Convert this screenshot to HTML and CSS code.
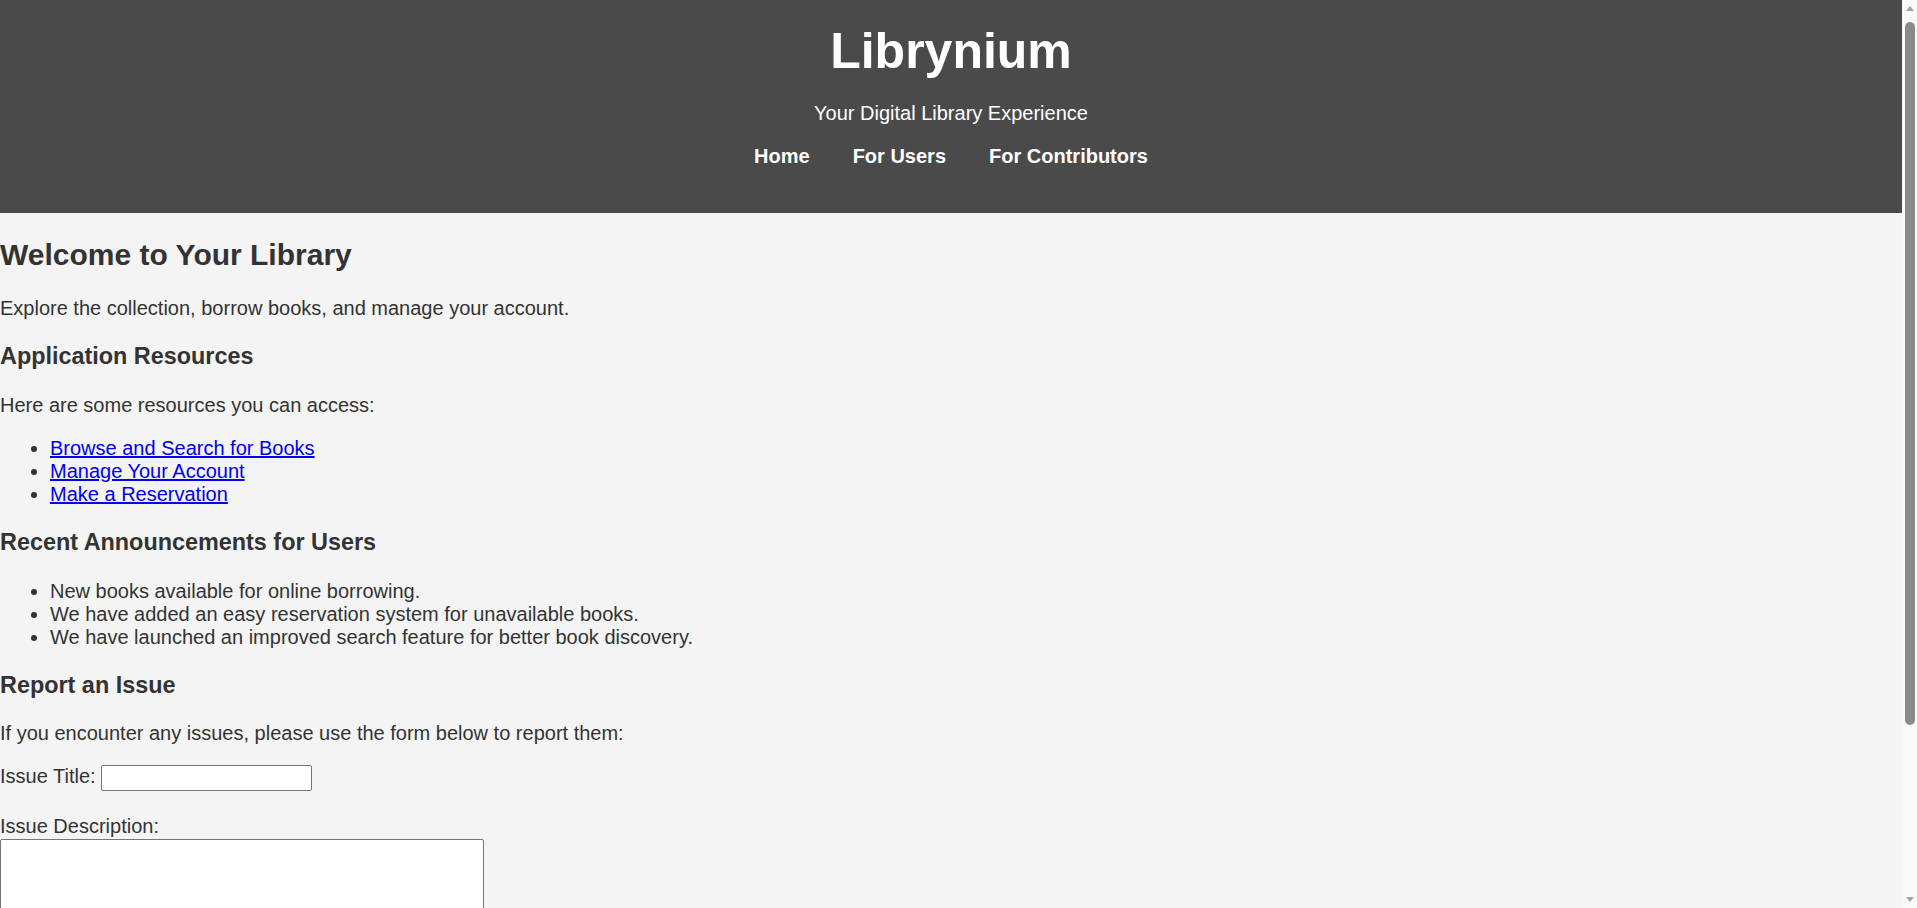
FILE: index.html
```html
<!DOCTYPE html>
<html lang="en">
<head>
<meta charset="utf-8">
<title>Librynium</title>
<link rel="stylesheet" href="styles.css">
</head>
<body>
<header class="site-header">
  <h1 class="site-title">Librynium</h1>
  <p class="site-tagline">Your Digital Library Experience</p>
  <nav class="site-nav">
    <a href="#" class="nav-link">Home</a>
    <a href="#" class="nav-link">For Users</a>
    <a href="#" class="nav-link">For Contributors</a>
  </nav>
</header>
<main class="content">
  <h2 class="page-title">Welcome to Your Library</h2>
  <p>Explore the collection, borrow books, and manage your account.</p>

  <h3>Application Resources</h3>
  <p>Here are some resources you can access:</p>
  <ul class="list">
    <li><a href="#" class="resource-link">Browse and Search for Books</a></li>
    <li><a href="#" class="resource-link">Manage Your Account</a></li>
    <li><a href="#" class="resource-link">Make a Reservation</a></li>
  </ul>

  <h3>Recent Announcements for Users</h3>
  <ul class="list">
    <li>New books available for online borrowing.</li>
    <li>We have added an easy reservation system for unavailable books.</li>
    <li>We have launched an improved search feature for better book discovery.</li>
  </ul>

  <h3>Report an Issue</h3>
  <p>If you encounter any issues, please use the form below to report them:</p>
  <form class="issue-form">
    <div class="field-inline">
      <label for="issue-title">Issue Title:</label> <input id="issue-title" type="text" class="text-input">
    </div>
    <div class="field-block">
      <label for="issue-desc" class="block-label">Issue Description:</label>
      <textarea id="issue-desc" class="text-area"></textarea>
    </div>
  </form>
</main>
<div class="fake-scrollbar" aria-hidden="true">
  <span class="sb-arrow sb-up"></span>
  <span class="sb-thumb"></span>
  <span class="sb-spacer"></span>
  <span class="sb-arrow sb-down"></span>
</div>
</body>
</html>
```
FILE: styles.css
```css
html, body {
  margin: 0;
  padding: 0;
}

body {
  font-family: "Liberation Sans", Arial, sans-serif;
  font-size: 20px;
  color: #333333;
  background: #f4f4f4;
  padding-right: 15px;
}

.site-header {
  background: #4a4a4a;
  color: #ffffff;
  text-align: center;
  padding: 22px 0 45px;
}

.site-title {
  font-size: 50px;
  font-weight: bold;
  margin: 0 0 22px;
}

.site-tagline {
  margin: 0 0 20px;
  font-size: 20px;
}

.site-nav {
  display: flex;
  justify-content: center;
  gap: 43px;
}

.nav-link {
  color: #ffffff;
  font-weight: bold;
  text-decoration: none;
  font-size: 20px;
}

.content {
  padding: 0 0 40px;
}

.page-title {
  font-size: 30px;
  margin: 25px 0;
}

.content h3 {
  font-size: 23.4px;
  margin: 23.4px 0;
}

.content p {
  margin: 20px 0;
}

.list {
  margin: 20px 0;
  padding-left: 50px;
}

.resource-link {
  color: #0000ee;
}

.issue-form {
  margin: 0;
}

.field-inline {
  margin: 0 0 24px;
}

.text-input {
  font-family: "Liberation Sans", Arial, sans-serif;
  font-size: 16px;
  width: 211px;
  height: 26px;
  box-sizing: border-box;
  padding: 1px 3px;
  border: 1px solid #767676;
  border-radius: 2px;
  background: #ffffff;
  vertical-align: baseline;
}

.block-label {
  display: block;
}

.text-area {
  display: block;
  margin-top: 1px;
  width: 484px;
  height: 125px;
  box-sizing: border-box;
  border: 1px solid #767676;
  border-radius: 2px;
  background: #ffffff;
  font-family: "Liberation Mono", monospace;
  font-size: 16px;
}

/* imitation of the browser's vertical scrollbar */
.fake-scrollbar {
  position: fixed;
  top: 0;
  right: 0;
  bottom: 0;
  width: 15px;
  background: #f9f9f9;
  display: flex;
  flex-direction: column;
  align-items: center;
  z-index: 10;
}

.sb-arrow {
  width: 0;
  height: 0;
  border-left: 4px solid transparent;
  border-right: 4px solid transparent;
  flex: none;
}

.sb-up {
  margin-top: 6px;
  border-bottom: 5px solid #a3a3a3;
}

.sb-down {
  margin-bottom: 6px;
  border-top: 5px solid #a3a3a3;
}

.sb-thumb {
  margin-top: 11px;
  width: 10px;
  height: 703px;
  border-radius: 5px;
  background: #8a8a8a;
  flex: none;
}

.sb-spacer {
  flex: 1;
}
```
